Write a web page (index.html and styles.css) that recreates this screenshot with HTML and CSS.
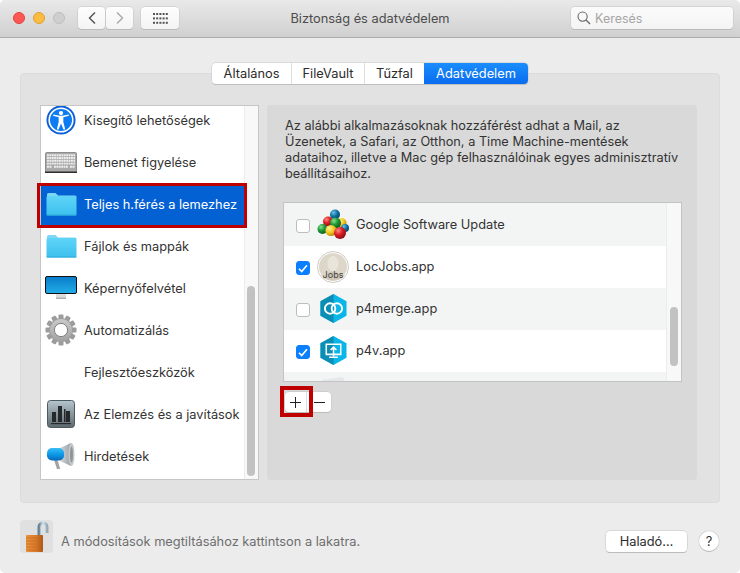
FILE: index.html
```html
<!DOCTYPE html>
<html lang="hu">
<head>
<meta charset="utf-8">
<title>Biztonság és adatvédelem</title>
<link rel="stylesheet" href="styles.css">
</head>
<body>
<div class="window">
  <header class="titlebar">
    <div class="lights"><span class="light red"></span><span class="light yellow"></span><span class="light off"></span></div>
    <div class="nav">
      <button class="tb-btn nav-btn"><svg width="10" height="14" viewBox="0 0 10 14"><path d="M8 1.500 2.500 7 8 12.500" fill="none" stroke="#505050" stroke-width="1.400"/></svg></button>
      <button class="tb-btn nav-btn"><svg width="10" height="14" viewBox="0 0 10 14"><path d="M2 1.500 7.500 7 2 12.500" fill="none" stroke="#a8a8a8" stroke-width="1.400"/></svg></button>
    </div>
    <button class="tb-btn grid-btn"><svg width="15" height="11" viewBox="0 0 15 11" fill="#555"><rect x="0" y="0" width="2" height="2"/><rect x="3.200" y="0" width="2" height="2"/><rect x="6.400" y="0" width="2" height="2"/><rect x="9.600" y="0" width="2" height="2"/><rect x="12.800" y="0" width="2" height="2"/><rect x="0" y="4.400" width="2" height="2"/><rect x="3.200" y="4.400" width="2" height="2"/><rect x="6.400" y="4.400" width="2" height="2"/><rect x="9.600" y="4.400" width="2" height="2"/><rect x="12.800" y="4.400" width="2" height="2"/><rect x="0" y="8.800" width="2" height="2"/><rect x="3.200" y="8.800" width="2" height="2"/><rect x="6.400" y="8.800" width="2" height="2"/><rect x="9.600" y="8.800" width="2" height="2"/><rect x="12.800" y="8.800" width="2" height="2"/></svg></button>
    <div class="title">Biztonság és adatvédelem</div>
    <div class="search">
      <svg width="14" height="14" viewBox="0 0 14 14"><circle cx="5.600" cy="5.600" r="4.600" fill="none" stroke="#666" stroke-width="1.100"/><path d="M9 9l4 4" stroke="#666" stroke-width="1.200"/></svg>
      <span>Keresés</span>
    </div>
  </header>

  <main class="content">
    <nav class="tabs">
      <span class="tab t1">Általános</span>
      <span class="tab t2">FileVault</span>
      <span class="tab t3">Tűzfal</span>
      <span class="tab t4 active">Adatvédelem</span>
    </nav>
    <section class="panel">
      <div class="side">
        <ul class="side-list">
          <li class="side-row"><span class="ic"><svg width="30" height="30" viewBox="0 0 32 32"><circle cx="16" cy="16" r="15.500" fill="#0a5fd6"/><circle cx="16" cy="16" r="12.600" fill="#0d7cf2" stroke="#fff" stroke-width="1.700"/><circle cx="16" cy="8.600" r="2.300" fill="#fff"/><path d="M7.500 11.500 13.500 13v5l-2 8h1.800l2.700-6.400 2.700 6.400h1.800l-2-8v-5l6-1.500-.4-1.400-6.600 1.400h-3l-6.600-1.400z" fill="#fff"/></svg></span>Kisegítő lehetőségek</li>
          <li class="side-row"><span class="ic"><svg width="32" height="21" viewBox="0 0 32 21"><rect x="0.500" y="0.500" width="31" height="20" rx="1" fill="#a9a9a9" stroke="#8f8f8f"/><rect y="19.500" width="32" height="1.500" fill="#2d2d2d"/><g fill="none" stroke="#efefef" stroke-width="1.900" stroke-dasharray="1.900 .5"><path d="M2 3.200h28M2 6h28M2 8.800h28M2 11.600h28"/><path d="M2 14.800h5M9 14.800h14M25 14.800h5"/></g></svg></span>Bemenet figyelése</li>
          <li class="side-row sel"><span class="ic"><svg width="31" height="24" viewBox="0 0 31 24"><use href="#folder"/></svg></span>Teljes h.férés a lemezhez</li>
          <li class="side-row"><span class="ic"><svg width="31" height="24" viewBox="0 0 31 24"><use href="#folder"/></svg></span>Fájlok és mappák</li>
          <li class="side-row"><span class="ic"><svg width="32" height="24" viewBox="0 0 32 24"><rect x="11" y="18" width="10" height="5" fill="#dcdcdc"/><rect x="11" y="21.500" width="10" height="1.500" fill="#b0b0b0"/><rect x="0.500" y="0.500" width="31" height="17" rx="1.500" fill="url(#scr)" stroke="#111"/></svg></span>Képernyőfelvétel</li>
          <li class="side-row"><span class="ic"><svg width="32" height="32" viewBox="0 0 32 32"><g fill="#9c9c9c"><circle cx="16" cy="16" r="12"/><rect x="13.500" y="0.500" width="5" height="31" rx="1"/><rect x="13.500" y="0.500" width="5" height="31" rx="1" transform="rotate(30 16 16)"/><rect x="13.500" y="0.500" width="5" height="31" rx="1" transform="rotate(60 16 16)"/><rect x="13.500" y="0.500" width="5" height="31" rx="1" transform="rotate(90 16 16)"/><rect x="13.500" y="0.500" width="5" height="31" rx="1" transform="rotate(120 16 16)"/><rect x="13.500" y="0.500" width="5" height="31" rx="1" transform="rotate(150 16 16)"/></g><circle cx="16" cy="16" r="11" fill="url(#gear)"/><circle cx="16" cy="16" r="6.600" fill="#fff" stroke="#808080" stroke-width="1"/></svg></span>Automatizálás</li>
          <li class="side-row"><span class="ic"></span>Fejlesztőeszközök</li>
          <li class="side-row"><span class="ic"><svg width="28" height="28" viewBox="0 0 28 28"><rect x="0.500" y="0.500" width="27" height="27" rx="3" fill="url(#stat)" stroke="#4c5a63"/><g fill="#25292b"><rect x="5" y="12" width="4" height="10"/><rect x="11" y="6" width="4" height="16"/><rect x="17" y="9" width="1.500" height="13"/><rect x="19" y="11" width="4" height="11"/><rect x="4" y="23" width="20" height="1.200"/></g></svg></span>Az Elemzés és a javítások</li>
          <li class="side-row"><span class="ic"><svg width="28" height="27" viewBox="0 0 28 27"><path d="M7 17l3 9h3.200l-2.600-9z" fill="#a3a3a3"/><path d="M13 5 24 0v23l-11-5z" fill="url(#horn)"/><ellipse cx="24.500" cy="11.500" rx="3" ry="11.500" fill="#c3c8cb"/><ellipse cx="24.500" cy="11.500" rx="1.500" ry="8" fill="#8e9498"/><rect x="0" y="5" width="17" height="12.500" rx="5" fill="url(#mega)"/></svg></span>Hirdetések</li>
        </ul>
        <div class="side-scroll"><span class="side-thumb"></span></div>
      </div>

      <div class="detail">
        <p class="desc">Az alábbi alkalmazásoknak hozzáférést adhat a Mail, az Üzenetek, a Safari, az Otthon, a Time Machine-mentések adataihoz, illetve a Mac gép felhasználóinak egyes adminisztratív beállításaihoz.</p>
        <div class="table">
          <ul class="rows">
            <li class="row"><span class="cb"></span><span class="app"><svg width="32" height="31" viewBox="0 0 32 31"><circle cx="18" cy="5.500" r="5" fill="url(#bBlue)"/><circle cx="24.500" cy="14" r="5" fill="url(#bYel)"/><circle cx="28" cy="19" r="4" fill="url(#bBlue)"/><circle cx="11" cy="12.500" r="5" fill="url(#bRed)"/><circle cx="5.500" cy="20" r="5" fill="url(#bGreen)"/><circle cx="18.500" cy="14" r="5.500" fill="url(#bGreen)"/><circle cx="14" cy="21.500" r="5.600" fill="url(#bYel)"/><circle cx="23" cy="24" r="6" fill="url(#bRed)"/></svg></span><span>Google Software Update</span></li>
            <li class="row"><span class="cb on"><svg width="10" height="9" viewBox="0 0 10 9"><path d="M1 4.700 3.700 7.600 9 1.200" fill="none" stroke="#fff" stroke-width="1.600"/></svg></span><span class="app"><svg width="32" height="32" viewBox="0 0 32 32"><circle cx="16" cy="16" r="15.500" fill="#fff" stroke="#cfcbc4"/><circle cx="16" cy="16" r="14" fill="#ddd7ca"/><ellipse cx="16" cy="12.500" rx="5.500" ry="7.500" fill="#e9e5db"/><path d="M7 27c1-5 5-6 9-6s8 1 9 6c-5 3-13 3-18 0z" fill="#cfc8b8"/><text class="jobs" x="16" y="27" text-anchor="middle">Jobs</text></svg></span><span>LocJobs.app</span></li>
            <li class="row"><span class="cb"></span><span class="app"><svg width="27" height="31" viewBox="0 0 28 31"><path d="M14 .5 27.500 8v15L14 30.500.5 23V8z" fill="#0ab5e8"/><path d="M14 .5 .5 8v15L14 30.500z" fill="#0c8db3"/><circle cx="10.500" cy="15.500" r="5.400" fill="none" stroke="#fff" stroke-width="2"/><circle cx="17.500" cy="15.500" r="5.400" fill="none" stroke="#fff" stroke-width="2"/></svg></span><span>p4merge.app</span></li>
            <li class="row"><span class="cb on"><svg width="10" height="9" viewBox="0 0 10 9"><path d="M1 4.700 3.700 7.600 9 1.200" fill="none" stroke="#fff" stroke-width="1.600"/></svg></span><span class="app"><svg width="27" height="31" viewBox="0 0 28 31"><path d="M14 .5 27.500 8v15L14 30.500.5 23V8z" fill="#0ab5e8"/><path d="M14 .5 .5 8v15L14 30.500z" fill="#0c8db3"/><path d="M6.500 9h15v10.500h-15zM14 21.500v-9M11 15l3-3 3 3M9.500 22.500h9" fill="none" stroke="#fff" stroke-width="1.600"/></svg></span><span>p4v.app</span></li>
            <li class="row"><span class="app peek"><svg width="24" height="5" viewBox="0 0 24 5"><path d="M1 3 22 0l2 5H1z" fill="#e3e8ea"/></svg></span></li>
          </ul>
          <div class="t-scroll"><span class="t-thumb"></span></div>
        </div>
        <div class="plusminus">
          <button class="pm pm-plus"><svg width="11" height="11" viewBox="0 0 11 11"><path d="M5.500 0v11M0 5.500h11" stroke="#222" stroke-width="1"/></svg></button>
          <button class="pm pm-minus"><svg width="11" height="11" viewBox="0 0 11 11"><path d="M0 5.500h11" stroke="#222" stroke-width="1"/></svg></button>
          <span class="mark mark-plus"></span>
        </div>
      </div>
      <span class="mark mark-sel"></span>
    </section>

    <footer class="bottom">
      <span class="lock"><svg width="33" height="33" viewBox="0 0 33 33"><path d="M19 15V7a4 4 0 0 1 8 0v6" fill="none" stroke="url(#shackle)" stroke-width="3"/><rect x="6" y="15" width="17" height="17" rx="1" fill="url(#brass)"/><path d="M6 18h17M6 21h17M6 24h17M6 27h17M6 30h17" stroke="#c5671f" stroke-width="1" opacity=".6"/></svg></span>
      <span class="hint">A módosítások megtiltásához kattintson a lakatra.</span>
      <button class="adv">Haladó…</button>
      <button class="help">?</button>
    </footer>
  </main>
</div>

<svg class="defs" width="0" height="0">
  <defs>
    <linearGradient id="scr" x1="0" y1="0" x2="0" y2="1"><stop offset="0" stop-color="#0a7bc9"/><stop offset="1" stop-color="#22ade8"/></linearGradient>
    <linearGradient id="stat" x1="0" y1="0" x2="0" y2="1"><stop offset="0" stop-color="#b6c6cd"/><stop offset="1" stop-color="#5d686d"/></linearGradient>
    <linearGradient id="horn" x1="0" y1="0" x2="1" y2="0"><stop offset="0" stop-color="#d2d7da"/><stop offset="1" stop-color="#9aa1a5"/></linearGradient>
    <linearGradient id="mega" x1="0" y1="0" x2="0" y2="1"><stop offset="0" stop-color="#38bdf5"/><stop offset=".55" stop-color="#0a96e6"/><stop offset="1" stop-color="#0869b4"/></linearGradient>
    <linearGradient id="gear" x1="0" y1="0" x2="0" y2="1"><stop offset="0" stop-color="#c9c9c9"/><stop offset="1" stop-color="#a3a3a3"/></linearGradient>
    <linearGradient id="brass" x1="0" y1="0" x2="1" y2="0"><stop offset="0" stop-color="#e8933c"/><stop offset=".6" stop-color="#d7792a"/><stop offset="1" stop-color="#a85616"/></linearGradient>
    <linearGradient id="shackle" x1="0" y1="0" x2="1" y2="0"><stop offset="0" stop-color="#5f8296"/><stop offset=".5" stop-color="#d6e2e8"/><stop offset="1" stop-color="#93aab6"/></linearGradient>
    <linearGradient id="fold" x1="0" y1="0" x2="0" y2="1"><stop offset="0" stop-color="#5fd4f8"/><stop offset="1" stop-color="#3cc0ee"/></linearGradient>
    <radialGradient id="bRed" cx=".35" cy=".3" r=".8"><stop offset="0" stop-color="#ff8a80"/><stop offset=".45" stop-color="#dc1c24"/><stop offset="1" stop-color="#7c0b10"/></radialGradient>
    <radialGradient id="bGreen" cx=".35" cy=".3" r=".8"><stop offset="0" stop-color="#8fe08f"/><stop offset=".45" stop-color="#1c9a35"/><stop offset="1" stop-color="#0b4f1a"/></radialGradient>
    <radialGradient id="bYel" cx=".35" cy=".3" r=".8"><stop offset="0" stop-color="#fff2a0"/><stop offset=".5" stop-color="#f2c81c"/><stop offset="1" stop-color="#a87a08"/></radialGradient>
    <radialGradient id="bBlue" cx=".35" cy=".3" r=".8"><stop offset="0" stop-color="#6ec0e8"/><stop offset=".5" stop-color="#0b6f9f"/><stop offset="1" stop-color="#063c5c"/></radialGradient>
    <g id="folder"><path d="M1 5V2.500A1.500 1.500 0 0 1 2.500 1h7L12 3.500h17A1.500 1.500 0 0 1 30.500 5z" fill="#7fd6f2"/><rect x="0.500" y="4" width="30" height="19.500" rx="1.500" fill="url(#fold)"/><rect x="0.500" y="22.500" width="30" height="1" fill="#2ea9d8"/></g>
  </defs>
</svg>
</body>
</html>
```
FILE: styles.css
```css
* { box-sizing: border-box; }
html, body { margin: 0; padding: 0; background: #fff; }
body { font-family: Inter, "Liberation Sans", sans-serif; font-size: 12.800px; color: #333; }
ul { list-style: none; margin: 0; padding: 0; }
p { margin: 0; }
button { font: inherit; padding: 0; margin: 0; }
.defs { position: absolute; }

.window { width: 740px; height: 573px; background: #ececec; border-radius: 5px; overflow: hidden; display: flex; flex-direction: column; }

.titlebar { height: 38px; flex: none; display: flex; align-items: center; padding: 0 7px 1px 13px; background: linear-gradient(#e9e9e9, #d0d0d0); border-bottom: 1px solid #acacac; }
.lights { display: flex; gap: 8px; width: 65px; flex: none; }
.light { width: 12px; height: 12px; border-radius: 50%; }
.red { background: #fc5753; border: 1px solid #e0443e; }
.yellow { background: #fdbc40; border: 1px solid #dea034; }
.off { background: #cfcfcf; border: 1px solid #bdbdbd; }
.tb-btn { height: 22px; background: linear-gradient(#fdfdfd, #f4f4f4); border: 0; border-radius: 4px; box-shadow: 0 0 0 .5px #c4c4c4, 0 1px 0 #b4b4b4; display: flex; align-items: center; justify-content: center; }
.nav { display: flex; gap: 1px; flex: none; }
.nav-btn { width: 27px; }
.grid-btn { width: 38px; margin-left: 8px; flex: none; }
.title { flex: 1; text-align: center; color: #4c4c4c; padding-right: 10px; font-size: 12.800px; }
.search { width: 162px; height: 22px; flex: none; background: linear-gradient(#fbfbfb, #f4f4f4); border-radius: 4px; box-shadow: 0 0 0 .5px #c4c4c4, 0 1px 0 #b4b4b4; display: flex; align-items: center; gap: 4px; padding-left: 6px; color: #a6a6a6; font-size: 12.500px; }

.content { flex: 1; padding: 25px 20px 0; display: flex; flex-direction: column; }
.tabs { align-self: center; display: flex; height: 21px; position: relative; z-index: 1; margin-bottom: -11px; background: #fff; border-radius: 4px; box-shadow: 0 0 0 .5px #c8c8c8, 0 1px 0 #b4b4b4; }
.tab { display: flex; align-items: center; justify-content: center; color: #2b2b2b; border-right: 1px solid #dedede; height: 100%; }
.t1 { width: 80px; border-radius: 4px 0 0 4px; }
.t2 { width: 73px; }
.t3 { width: 59px; border-right: 0; }
.t4 { width: 104px; }
.active { color: #fff; background: linear-gradient(#1a8dfb, #0a6cf0); border-radius: 0 4px 4px 0; border: 0; }

.panel { position: relative; height: 430px; flex: none; background: #e2e2e2; border: 1px solid #dcdcdc; border-radius: 4px; padding: 31px 22px 22px 19px; display: flex; gap: 8px; }

.side { width: 219px; height: 375px; flex: none; background: #fff; border: 1px solid #c6c6c6; display: flex; overflow: hidden; }
.side-list { flex: 1; margin-top: -7px; }
.side-row { height: 42px; display: flex; align-items: center; color: #333; }
.side-row .ic { width: 43px; flex: none; display: flex; justify-content: center; padding-right: 3px; }
.sel { background: #0461d4; color: #fff; }
.side-scroll { width: 14px; flex: none; background: #f8f8f8; border-left: 1px solid #ececec; padding: 180px 3px 3px 2px; display: flex; }
.side-thumb { flex: 1; background: #c2c2c2; border-radius: 4px; }

.detail { flex: 1; background: #d9d9d9; border-radius: 3px; padding: 13px 15px 0 16px; display: flex; flex-direction: column; height: 375px; }
.desc { line-height: 16px; height: 81px; margin-left: 2px; color: #333; margin-bottom: 3px; font-size: 12.750px; }
.table { height: 180px; border: 1px solid #c3c3c3; background: #fff; display: flex; overflow: hidden; margin-bottom: 10px; }
.rows { flex: 1; }
.row { height: 42px; display: flex; align-items: center; padding: 0 0 1px 12px; background: #fff; color: #333; }
.row:nth-child(odd) { background: #f3f5f5; }
.row:first-child { height: 43px; padding-bottom: 0; }
.cb { width: 14px; height: 14px; flex: none; margin-top: 3px; background: #fff; border: 1px solid #bdbdbd; border-radius: 3px; display: flex; align-items: center; justify-content: center; }
.cb.on { background: #0a80ff; border-color: #0a80ff; }
.app { width: 32px; flex: none; margin: 0 7px 0 7px; display: flex; justify-content: center; }
.peek { align-self: flex-start; margin: 5px 0 0 21px; }
.jobs { font-size: 9px; fill: #444; font-family: Inter, sans-serif; }
.t-scroll { width: 15px; flex: none; background: #f8f8f8; border-left: 1px solid #ececec; padding: 104px 3px 15px 3px; display: flex; }
.t-thumb { flex: 1; background: #c2c2c2; border-radius: 4px; }

.plusminus { position: relative; display: flex; width: 46px; height: 20px; margin-left: 2px; background: #fff; border-radius: 4px; box-shadow: 0 0 0 .5px #c4c4c4, 0 1px 0 #b4b4b4; }
.pm { height: 20px; border: 0; background: transparent; display: flex; align-items: center; justify-content: center; }
.pm-plus { width: 22px; border-right: 1px solid #dcdcdc; }
.pm-minus { width: 24px; }
.mark { position: absolute; border: 4px solid #bf0000; pointer-events: none; }
.mark-plus { left: -5px; top: -6px; width: 33px; height: 31px; }
.mark-sel { left: 16px; top: 109px; width: 210px; height: 45px; border-width: 3px; }

.bottom { flex: 1; display: flex; align-items: flex-start; position: relative; padding-top: 17px; }
.lock { width: 33px; height: 33px; background: #e0e0e0; border-radius: 4px; flex: none; }
.hint { color: #6e6e6e; margin: 14px 0 0 8px; flex: 1; }
.adv { width: 81px; height: 21px; margin-top: 11px; background: #fff; border: 0; border-radius: 4px; box-shadow: 0 0 0 .5px #c4c4c4, 0 1px 0 #b4b4b4; color: #2b2b2b; }
.help { width: 20px; height: 20px; margin: 11px 1px 0 12px; background: #fff; border: 0; border-radius: 50%; box-shadow: 0 0 0 .5px #c4c4c4, 0 1px 0 #b4b4b4; color: #333; }
```
